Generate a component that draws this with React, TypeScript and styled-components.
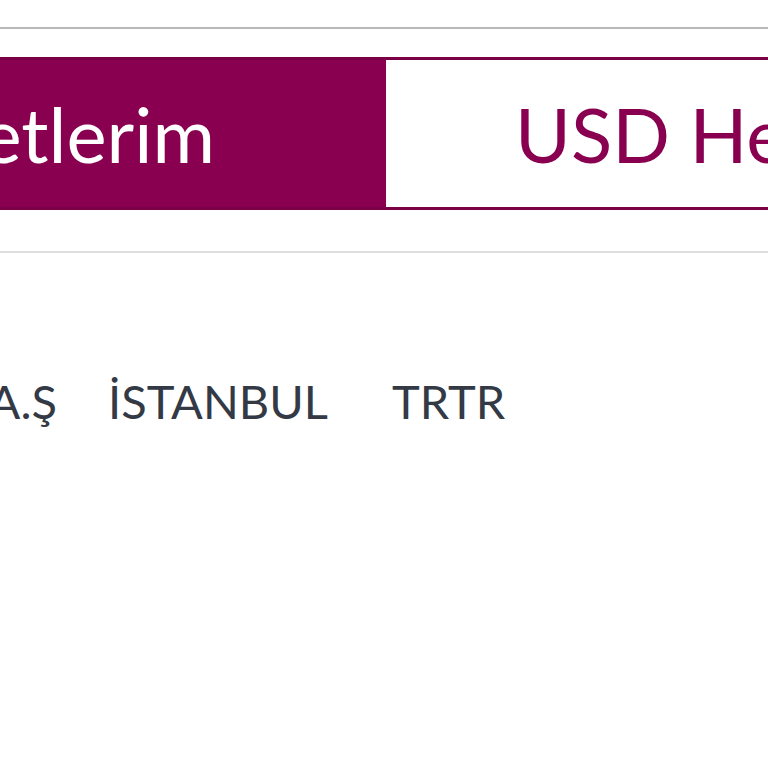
import { FC } from "react";
import styled, { createGlobalStyle } from "styled-components";

const GlobalStyle = createGlobalStyle`
  body {
    margin: 0;
    background: #ffffff;
    font-family: Lato, "Open Sans", sans-serif;
    overflow: hidden;
  }
`;

const Page = styled.div`
  width: 768px;
  height: 768px;
  overflow: hidden;
  display: flex;
  flex-direction: column;
`;

const Rule = styled.div<{ $top: number; $color: string }>`
  height: 2px;
  margin-top: ${(p) => p.$top}px;
  background: ${(p) => p.$color};
`;

const TabBar = styled.div`
  margin-top: 28px;
  display: flex;
  height: 153px;
  box-sizing: border-box;
  border-top: 3px solid #7a0047;
  border-bottom: 3px solid #7a0047;
`;

const Tab = styled.div<{ $active?: boolean }>`
  display: flex;
  align-items: center;
  overflow: hidden;
  white-space: nowrap;
  font-size: 76px;
  ${(p) =>
    p.$active
      ? `
    flex: 0 0 386px;
    justify-content: flex-end;
    padding-right: 171px;
    box-sizing: border-box;
    background: #8a0050;
    color: #ffffff;
  `
      : `
    flex: 1;
    padding-left: 129px;
    background: #ffffff;
    color: #8a0050;
  `}
`;

const InfoRow = styled.div`
  margin-top: 120px;
  display: flex;
  align-items: center;
  font-size: 47px;
  color: #333945;
  white-space: nowrap;
`;

const Cell = styled.div<{ $width: number; $end?: boolean; $pad?: number }>`
  flex: 0 0 ${(p) => p.$width}px;
  box-sizing: border-box;
  padding-left: ${(p) => p.$pad ?? 0}px;
  display: flex;
  justify-content: ${(p) => (p.$end ? "flex-end" : "flex-start")};
  overflow: hidden;
`;

const App: FC = () => {
  return (
    <>
      <GlobalStyle />
      <Page>
        <Rule $top={27} $color="#b9b9b9" />
        <TabBar>
          <Tab $active>Hizmetlerim</Tab>
          <Tab>USD Hesaplarım</Tab>
        </TabBar>
        <Rule $top={41} $color="#dedede" />
        <InfoRow>
          <Cell $width={57} $end>
            BANK A.Ş
          </Cell>
          <Cell $width={335} $pad={51}>
            İSTANBUL
          </Cell>
          <Cell $width={300}>TRTR</Cell>
        </InfoRow>
      </Page>
    </>
  );
};

export default App;
